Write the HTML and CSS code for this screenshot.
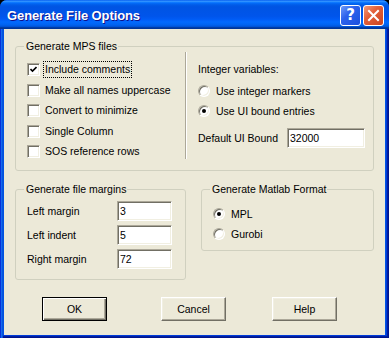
FILE: index.html
```html
<!DOCTYPE html>
<html lang="en">
<head>
  <meta charset="UTF-8">
  <meta name="viewport" content="width=device-width, initial-scale=1.0">
  <title>Generate File Options</title>
  <link rel="stylesheet" href="styles.css">
</head>
<body>
  <div class="window">
    <!-- Title bar -->
    <div class="titlebar">
      <span class="title">Generate File Options</span>
      <div class="title-controls">
        <button class="tb-btn tb-help">?</button>
        <button class="tb-btn tb-close">
          <svg width="19" height="19" viewBox="0 0 19 19">
            <path d="M5 5 L14 14 M14 5 L5 14" stroke="#fff" stroke-width="2" stroke-linecap="square"/>
          </svg>
        </button>
      </div>
    </div>

    <div class="frame">
      <div class="client">
        <!-- Generate MPS files -->
        <fieldset class="group mps">
          <legend>Generate MPS files</legend>
          <div class="mps-body">
            <div class="col-left">
              <label class="check">
                <span class="box checked">
                  <svg width="7" height="7" viewBox="0 0 7 7"><path d="M0.5 3 L2.5 5 L6.5 1" fill="none" stroke="#000" stroke-width="1.6"/></svg>
                </span>
                <span class="focus">Include comments</span>
              </label>
              <label class="check"><span class="box"></span><span>Make all names uppercase</span></label>
              <label class="check"><span class="box"></span><span>Convert to minimize</span></label>
              <label class="check"><span class="box"></span><span>Single Column</span></label>
              <label class="check"><span class="box"></span><span>SOS reference rows</span></label>
            </div>
            <div class="sep"></div>
            <div class="col-right">
              <div class="int-label">Integer variables:</div>
              <label class="radio-row first"><span class="radio"></span><span>Use integer markers</span></label>
              <label class="radio-row second"><span class="radio on"></span><span>Use UI bound entries</span></label>
              <div class="bound-row">
                <span class="bound-label">Default UI Bound</span>
                <input class="text-box bound-input" type="text" value="32000">
              </div>
            </div>
          </div>
        </fieldset>

        <div class="row2">
          <!-- Generate file margins -->
          <fieldset class="group margins">
            <legend>Generate file margins</legend>
            <div class="field"><span class="field-label">Left margin</span><input class="text-box small" type="text" value="3"></div>
            <div class="field"><span class="field-label">Left indent</span><input class="text-box small" type="text" value="5"></div>
            <div class="field"><span class="field-label">Right margin</span><input class="text-box small" type="text" value="72"></div>
          </fieldset>

          <!-- Generate Matlab Format -->
          <fieldset class="group matlab">
            <legend>Generate Matlab Format</legend>
            <label class="radio-row"><span class="radio on"></span><span>MPL</span></label>
            <label class="radio-row"><span class="radio"></span><span>Gurobi</span></label>
          </fieldset>
        </div>

        <div class="buttons">
          <button class="btn default">OK</button>
          <button class="btn cancel">Cancel</button>
          <button class="btn help">Help</button>
        </div>
      </div>
    </div>
  </div>
</body>
</html>
```

FILE: styles.css
```css
html, body {
  margin: 0;
  padding: 0;
  background: #000;
}
body {
  font-family: "Liberation Sans", Arial, sans-serif;
  font-size: 10.5px;
  color: #000;
}
.window {
  width: 389px;
  height: 338px;
  display: flex;
  flex-direction: column;
  border-radius: 7px 7px 0 0;
  overflow: hidden;
  background: #0054e3;
}
.titlebar {
  height: 29px;
  box-sizing: border-box;
  padding: 2px 5px 0 7px;
  display: flex;
  align-items: center;
  background: linear-gradient(to bottom, #0058ee 0%, #3593ff 4%, #288eff 6%, #127dff 8%, #036ffc 10%, #0262ee 14%, #0057e5 20%, #0054e3 24%, #0055eb 56%, #005bf5 66%, #026afe 76%, #0062ef 86%, #0052d6 92%, #0040ab 94%, #003092 100%);
}
.title {
  flex: 1;
  color: #fff;
  font-weight: bold;
  font-size: 13px;
  line-height: 15px;
  letter-spacing: -0.1px;
  text-shadow: 1px 1px #0f1089;
}
.title-controls {
  display: flex;
  gap: 2px;
}
.tb-btn {
  width: 21px;
  height: 21px;
  box-sizing: border-box;
  border: 1px solid #fff;
  border-radius: 3px;
  padding: 0;
  margin: 0;
  display: flex;
  align-items: center;
  justify-content: center;
  color: #fff;
}
.tb-help {
  background: linear-gradient(135deg, #6f9cf9 0%, #2c62ec 40%, #1c4fde 100%);
  font-family: "DejaVu Sans", sans-serif;
  font-weight: bold;
  font-size: 15px;
  line-height: 19px;
}
.tb-close {
  background: linear-gradient(135deg, #f39a7a 0%, #e3603a 40%, #cc4420 100%);
}
.frame {
  flex: 1;
  display: flex;
  padding: 0 4px 3px;
  box-shadow: inset 1px 0 #0831d9, inset 2px 0 #166aee, inset 3px 0 #0855dd, inset -1px -1px #00138c, inset -2px -2px #001ea0, inset -3px -3px #003bda;
}
.client {
  flex: 1;
  background: #ece9d8;
  padding: 11px 11px 0;
}

/* group boxes */
.group {
  margin: 0;
  border: 1px solid #d0d0bf;
  border-radius: 3px;
  padding: 0 11px;
  min-width: 0;
  box-sizing: border-box;
}
.group legend {
  padding: 0 1px 0 2px;
  margin-left: -3px;
  line-height: 13px;
}
.mps {
  padding-right: 0;
  padding-bottom: 11px;
}
.mps-body {
  display: flex;
  height: 106px;
}
.col-left {
  width: 158px;
  padding-top: 10px;
  display: flex;
  flex-direction: column;
  gap: 7.5px;
}
.check {
  display: flex;
  align-items: center;
  height: 13px;
  gap: 5px;
  line-height: 13px;
  white-space: nowrap;
}
.box {
  width: 13px;
  height: 13px;
  box-sizing: border-box;
  border: 1px solid;
  border-color: #aca899 #fff #fff #aca899;
  box-shadow: inset 1px 1px #716f64, inset -1px -1px #f1efe2;
  background: #fff;
  display: flex;
  align-items: center;
  justify-content: center;
  flex: none;
}
.focus {
  border: 1px dotted #000;
  padding: 1px 1px;
  margin-left: -2px;
}
.sep {
  width: 0;
  height: 107px;
  margin-top: -1px;
  border-left: 1px solid #aca899;
  border-right: 1px solid #fff;
}
.col-right {
  padding: 10px 0 0 11px;
}
.int-label {
  line-height: 13px;
}
.radio-row {
  display: flex;
  align-items: center;
  height: 12px;
  gap: 6px;
  line-height: 13px;
  white-space: nowrap;
}
.radio-row.first {
  margin-top: 9px;
}
.radio-row.second {
  margin-top: 8px;
}
.radio {
  width: 12px;
  height: 12px;
  box-sizing: border-box;
  border-radius: 50%;
  border: 1px solid;
  border-color: #aca899 #fff #fff #aca899;
  box-shadow: inset 1px 1px #716f64, inset -1px -1px #f1efe2;
  background: #fff;
  display: flex;
  align-items: center;
  justify-content: center;
  flex: none;
}
.radio.on::after {
  content: "";
  width: 4px;
  height: 4px;
  border-radius: 50%;
  background: #000;
}
.bound-row {
  display: flex;
  align-items: center;
  height: 20px;
  margin-top: 11px;
}
.bound-label {
  width: 89px;
  line-height: 13px;
}
.text-box {
  height: 20px;
  box-sizing: border-box;
  border: 1px solid;
  border-color: #aca899 #fff #fff #aca899;
  box-shadow: inset 1px 1px #716f64, inset -1px -1px #f1efe2;
  background: #fff;
  padding: 0 0 0 2px;
  margin: 0;
  font: 10.5px "Liberation Sans", Arial, sans-serif;
  color: #000;
  outline: none;
}
.bound-input {
  width: 78px;
}
.text-box.small {
  width: 55px;
}

.row2 {
  display: flex;
  align-items: flex-start;
  margin-top: 12px;
}
.margins {
  width: 171px;
  padding-top: 5px;
  padding-bottom: 10px;
  display: flex;
  flex-direction: column;
  gap: 4px;
}
.field {
  display: flex;
  align-items: center;
  height: 20px;
}
.field-label {
  width: 90px;
  line-height: 13px;
}
.matlab {
  width: 173px;
  margin-left: 15px;
  padding-top: 12px;
  padding-bottom: 10px;
  display: flex;
  flex-direction: column;
  gap: 8px;
}

/* buttons */
.buttons {
  display: flex;
  margin-top: 17px;
  padding-left: 27px;
}
.btn {
  width: 65px;
  height: 24px;
  box-sizing: border-box;
  background: #ece9d8;
  border: 1px solid;
  border-color: #fff #716f64 #716f64 #fff;
  box-shadow: inset -1px -1px #aca899, inset 1px 1px #f1efe2;
  font: 10.5px "Liberation Sans", Arial, sans-serif;
  color: #000;
  padding: 0;
  margin: 0;
}
.btn.default {
  border-color: #000;
  box-shadow: inset 1px 1px #fff, inset -1px -1px #716f64, inset -2px -2px #aca899;
}
.btn.cancel {
  margin-left: 54px;
}
.btn.help {
  margin-left: 46px;
}
```
